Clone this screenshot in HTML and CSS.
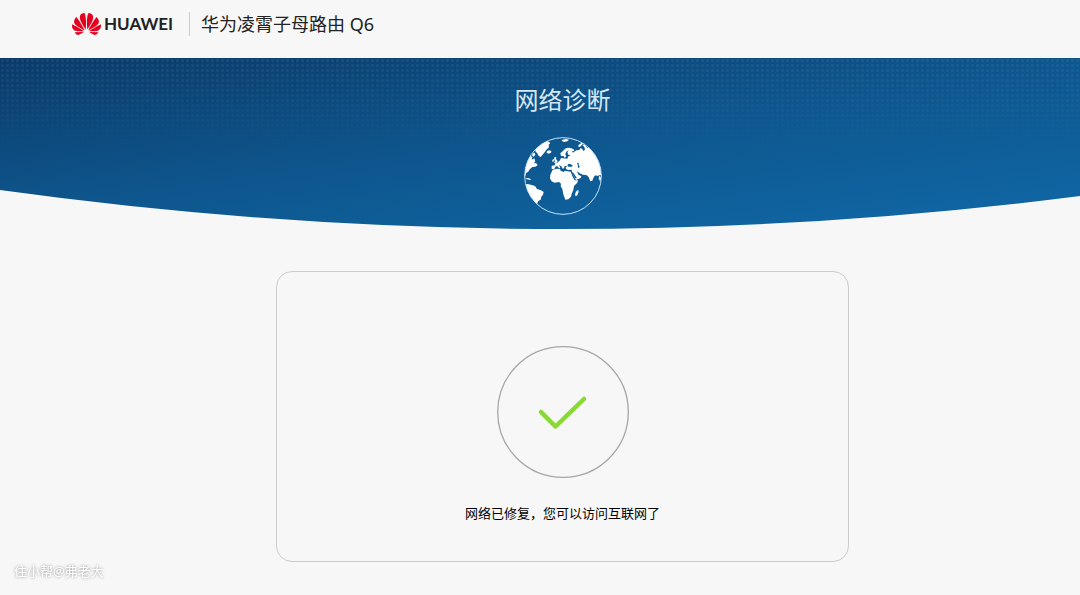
FILE: index.html
```html
<!DOCTYPE html>
<html lang="zh-CN">
<head>
    <meta charset="UTF-8" />
    <meta name="viewport" content="width=device-width, initial-scale=1.0"/>
    <title>网络诊断</title>
    <link rel="stylesheet" href="styles.css">
</head>
<body>
<div class="page">
    <header class="topbar">
        <div class="brand">
            <svg class="brand-mark" viewBox="0 2.9 24 18.2" aria-hidden="true">
                <path d="M3.67 6.14S1.82 7.91 1.72 9.78v.35c.08 1.51 1.22 2.4 1.22 2.4 1.83 1.79 6.26 4.04 7.3 4.55 0 0 .06.03.1-.01l.02-.04v-.04C7.52 10.8 3.67 6.14 3.67 6.14zM9.65 18.6c-.02-.08-.1-.08-.1-.08l-7.38.26c.8 1.43 2.15 2.53 3.56 2.2.96-.25 3.16-1.78 3.88-2.3.06-.05.04-.09.04-.09zm.08-.78C6.49 15.63.21 12.28.21 12.28c-.15.46-.2.9-.21 1.3v.07c0 1.07.4 1.82.4 1.82.8 1.69 2.34 2.2 2.34 2.2.7.3 1.4.31 1.4.31.12.02 4.4 0 5.54 0 .05 0 .08-.05.08-.05v-.06c0-.03-.03-.05-.03-.05zM9.06 3.19a3.42 3.42 0 00-2.57 3.15v.41c.03.6.16 1.05.16 1.05.66 2.9 3.86 7.65 4.55 8.65.05.05.1.03.1.03a.1.1 0 00.06-.1c1.06-10.6-1.11-13.42-1.11-13.42-.32.02-1.19.23-1.19.23zm8.3 2.27s-.49-1.8-2.44-2.28c0 0-.57-.14-1.17-.22 0 0-2.18 2.81-1.12 13.43.01.07.06.08.06.08.07.03.1-.03.1-.03.72-1.03 3.9-5.76 4.55-8.64 0 0 .36-1.4.02-2.34zm-2.92 13.07s-.07 0-.09.05c0 0-.01.07.03.1.7.51 2.85 2 3.88 2.3 0 0 .16.05.43.06h.14c.69-.02 1.9-.37 3-2.26l-7.4-.25zm7.83-8.41c.14-2.06-1.94-3.97-1.94-3.98 0 0-3.85 4.66-6.67 10.8 0 0-.03.08.02.13l.04.01h.06c1.06-.53 5.46-2.77 7.28-4.54 0 0 1.15-.93 1.21-2.42zm1.52 2.14s-6.28 3.37-9.52 5.55c0 0-.05.04-.03.11 0 0 .03.06.07.06 1.16 0 5.56 0 5.67-.02 0 0 .57-.02 1.27-.29 0 0 1.56-.5 2.37-2.27 0 0 .73-1.45.17-3.14z"/>
            </svg>
            <span class="brand-name">HUAWEI</span>
        </div>
        <span class="product">华为凌霄子母路由 Q6</span>
    </header>

    <section class="hero">
        <h1>网络诊断</h1>
        <svg class="globe" viewBox="41 34 234 234" aria-hidden="true">
            <defs>
                <clipPath id="globe-clip"><circle cx="158" cy="151" r="115"/></clipPath>
            </defs>
            <g clip-path="url(#globe-clip)" fill="#fff">
                <!-- Greenland and Iceland -->
                <path d="M84 62 L98 48 L112 46 L120 52 L115 57 L116 65 L108 72 L103 80 L96 88 L91 94 L85 91 L81 83 L76 78 L74 70z"/>
                <path d="M110 76 l6 -2 7 2 -1 5 -7 3 -6 -3z"/>
                <!-- North America -->
                <path d="M36 130 L48 106 L60 90 L66 94 L64 102 L72 98 L75 108 L70 112 L78 113 L82 119 L75 123 L66 124 L59 130 L53 139 L47 142 L45 152 L38 152z"/>
                <path d="M66 84 l7 -3 2 6 -5 6 -4 -2z"/>
                <path d="M47 157 l10 1 6 4 -7 0 -9 -2z"/>
                <!-- South America -->
                <path d="M42 177 L52 175 L64 178 L74 181 L80 190 L92 194 L100 199 L98 207 L93 213 L91 222 L84 226 L80 235 L72 238 L60 226 L48 205z"/>
                <!-- British Isles -->
                <path d="M133 94 l5 1 -1 5 5 7 -3 4 -8 1 3 -6 -3 -5z"/>
                <path d="M126 102 l5 -1 0 6 -5 2z"/>
                <!-- Svalbard and Arctic islands -->
                <path d="M154 43 l12 -3 10 2 -5 5 -9 2 -6 -2z"/>
                <path d="M204 59 l10 -8 5 2 -8 9 -6 3z"/>
                <!-- Europe and Asia -->
                <path d="M150 83 L157 77 L164 69 L172 66 L181 67 L190 71 L192 76 L185 77 L188 81 L198 74 L207 73 L211 67 L216 70 L219 76 L224 72 L222 64 L216 58 L222 56 L231 67 L236 66 L280 95 L278 150 L267 148 L262 151 L255 149 L250 155 L246 165 L240 167 L235 154 L228 148 L217 147 L208 143 L201 138 L205 147 L213 152 L211 157 L197 163 L192 153 L185 139 L184 132 L174 133 L167 130 L166 125 L171 121 L163 121 L161 128 L157 129 L153 122 L146 118 L150 127 L147 128 L140 121 L135 123 L132 130 L124 130 L124 120 L134 119 L134 113 L141 111 L149 104 L152 97 L158 98 L171 99 L174 92 L181 89 L174 87 L171 80 L175 73 L167 79 L165 87 L168 91 L163 97 L159 90 L152 92z"/>
                <!-- Africa -->
                <path d="M127 132 L140 129 L149 130 L151 135 L160 139 L164 135 L181 138 L186 151 L193 164 L203 164 L201 171 L191 181 L189 193 L184 204 L182 213 L174 221 L165 222 L159 206 L156 190 L151 182 L152 174 L146 169 L132 171 L123 166 L119 158 L120 147z"/>
                <path d="M203 192 l2 6 -4 11 -5 3 -2 -6 3 -8z"/>
                <path d="M268 149 l5 10 -4 8 -4 -9z"/>
            </g>
            <!-- Inland seas -->
            <g fill="#0f5c98">
                <path d="M171 119 l4 -5 6 2 6 3 -2 4 -11 0z"/>
                <path d="M202 111 l3 1 0 5 3 6 -2 4 -4 -2 1 -6 -3 -5z"/>
                <path d="M184 139 l5 2 9 14 0 4 -5 -4z"/>
                <path d="M199 135 l7 8 5 2 -2 3 -5 -2z"/>
            </g>
            <circle cx="158" cy="151" r="115" fill="none" stroke="#c5e5fb" stroke-width="3"/>
        </svg>
        <svg class="hero-curve" viewBox="0 0 1000 39" preserveAspectRatio="none" aria-hidden="true">
            <path d="M0 0 Q500 78 1000 0 V40 H0z"/>
        </svg>
    </section>

    <main class="result">
        <svg class="result-icon" viewBox="0 0 132 132" aria-hidden="true">
            <circle cx="66" cy="66" r="65.3"/>
            <path d="M44 66 L58.500 80.500 L87 53"/>
        </svg>
        <p>网络已修复，您可以访问互联网了</p>
    </main>
</div>
<div class="watermark">住小帮@弗老大</div>
</body>
</html>
```
FILE: styles.css
```css
:root {
    --bg: #f7f7f7;
    --text: #222;
    --border: #ccc;
    --red: #e6001f;
    --green: #88d932;
    --overhang: 45px;
}

* {
    box-sizing: border-box;
}

body {
    margin: 0;
    background: var(--bg);
    color: var(--text);
    font-family: "Noto Sans", "Noto Sans CJK SC", sans-serif;
    overflow-x: hidden;
}

/* the layout runs a little past the right edge of the window */
.page {
    width: calc(100% + var(--overhang));
}

.topbar {
    display: flex;
    align-items: center;
    height: 58px;
    padding: 0 72px 10px;
}

.brand {
    display: flex;
    align-items: center;
    gap: 3px;
    height: 24px;
    padding-right: 16px;
    border-right: 1px solid var(--border);
}

.brand-mark {
    width: 29px;
    height: 22px;
    fill: var(--red);
}

.brand-name {
    font-family: Lato, sans-serif;
    font-size: 17px;
    font-weight: 700;
    line-height: 24px;
}

.product {
    padding-left: 11px;
    font-size: 18px;
    line-height: 24px;
}

.hero {
    position: relative;
    display: flex;
    flex-direction: column;
    align-items: center;
    gap: 19px;
    padding: 24px 0 14px;
    background: linear-gradient(172deg, #0b3a68 0%, #0e558c 45%, #0f64a1 85%);
}

/* dot texture that fades out towards the curve */
.hero::before {
    content: "";
    position: absolute;
    inset: 0;
    background: radial-gradient(circle, rgba(110, 180, 220, 0.12) 1px, transparent 2px) 0 0 / 5px 5px;
    mask-image: linear-gradient(#000, transparent 55%);
}

.hero h1 {
    position: relative;
    margin: 0;
    color: #d5e8f6;
    font-size: 24px;
    font-weight: 400;
    line-height: 36px;
}

.globe {
    position: relative;
    width: 78px;
    height: 78px;
}

.hero-curve {
    position: absolute;
    left: 0;
    bottom: 0;
    width: 100%;
    height: 39px;
    fill: var(--bg);
}

.result {
    display: flex;
    flex-direction: column;
    align-items: center;
    gap: 23px;
    max-width: 573px;
    margin: 42px auto 32px;
    padding: 74px 20px 36px;
    border: 1px solid var(--border);
    border-radius: 16px;
}

.result-icon {
    width: 132px;
    height: 132px;
    fill: none;
}

.result-icon circle {
    stroke: #a6a6a6;
    stroke-width: 1.3;
}

.result-icon path {
    stroke: var(--green);
    stroke-width: 4.5;
    stroke-linecap: round;
    stroke-linejoin: round;
}

.result p {
    margin: 0;
    color: #000;
    font-size: 13px;
    line-height: 24px;
}

.watermark {
    position: fixed;
    left: 14px;
    bottom: 14px;
    color: #fff;
    font-size: 13px;
    line-height: 20px;
    text-shadow: 0 0 3px rgba(0, 0, 0, 0.45);
}
```
